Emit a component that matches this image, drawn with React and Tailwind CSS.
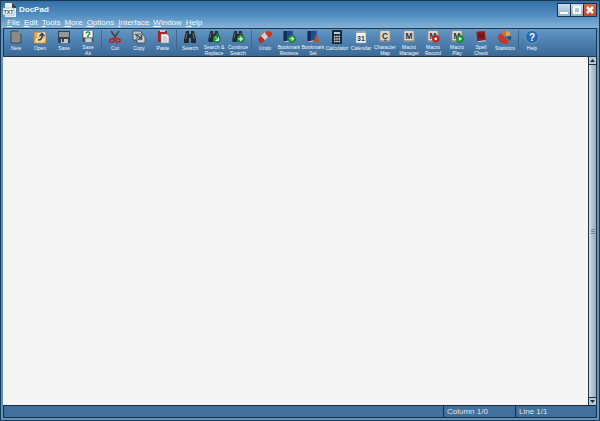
const menus = ["File", "Edit", "Tools", "More", "Options", "Interface", "Window", "Help"];

function NewIcon() {
  return (
    <>
      <path d="M2 1h7l3 3v9H2z" fill="#8c8c84" stroke="#33475a" strokeWidth="1" />
      <path d="M9 1v3h3" fill="#b5b5ae" stroke="#4c5a66" strokeWidth=".6" />
    </>
  );
}

function OpenIcon() {
  return (
    <>
      <path d="M1 2h5l1 2h6v9H1z" fill="#e9a94c" stroke="#b97828" strokeWidth=".7" />
      <path d="M4 3l8-1 1 9-8 1z" fill="#f3dfb2" />
      <path d="M1 13l2-6h10l-1 6z" fill="#f8d68c" stroke="#c08a35" strokeWidth=".6" />
      <path d="M5 10q5 0 4-6M6.500 6L9 3.500 11.500 6" fill="none" stroke="#24407e" strokeWidth="1.500" />
    </>
  );
}

function SaveIcon() {
  return (
    <>
      <path d="M1 1h12v12H2l-1-1z" fill="#36424d" />
      <path d="M2 2h10v5H2z" fill="#92979a" />
      <path d="M4 9h7v4H4z" fill="#c0c5c8" />
      <path d="M5 9h2v3H5z" fill="#38444e" />
    </>
  );
}

function SaveAsIcon() {
  return (
    <>
      <path d="M1 1h12v12H2l-1-1z" fill="#46545f" />
      <path d="M2 1h10v7H2z" fill="#f4f7f5" />
      <path d="M5 3.500q0-1.500 2-1.500t2 1.500q0 1-2 2" fill="none" stroke="#168a36" strokeWidth="1.500" />
      <path d="M6 6h2v1.500H6z" fill="#168a36" />
      <path d="M4 9h7v4H4z" fill="#ccd0d2" />
    </>
  );
}

function CutIcon() {
  return (
    <>
      <path d="M3 1l5 7M11 1L6 8" stroke="#3b4650" strokeWidth="1.500" />
      <ellipse cx="4" cy="10.500" rx="2.200" ry="1.700" fill="none" stroke="#b5261d" strokeWidth="1.600" />
      <ellipse cx="10" cy="10.500" rx="2.200" ry="1.700" fill="none" stroke="#b5261d" strokeWidth="1.600" />
      <path d="M5 9l2-2 2 2" fill="none" stroke="#b5261d" strokeWidth="1.200" />
    </>
  );
}

function CopyIcon() {
  return (
    <>
      <path d="M1 1h7l2 2v7H1z" fill="#c8c6ba" stroke="#39485a" strokeWidth=".8" />
      <path d="M5 4h5l3 3v6H5z" fill="#cfcdc2" stroke="#39485a" strokeWidth=".8" />
      <path d="M3 4l6 4M9.500 5v4H6" fill="none" stroke="#264b78" strokeWidth="1.500" />
    </>
  );
}

function PasteIcon() {
  return (
    <>
      <path d="M2 1h9v11H2z" fill="#a8231e" />
      <path d="M4 0h5v2H4z" fill="#c9ccd0" />
      <path d="M5 4h6l2 2v7H5z" fill="#f1f2f4" stroke="#6d7783" strokeWidth=".6" />
      <path d="M6.500 7h4M6.500 9h5M6.500 11h5" stroke="#8b93a0" strokeWidth=".7" />
    </>
  );
}

function Binoculars() {
  return (
    <>
      <path d="M3 1h3v3h2V1h3l2 8v4H8V8H6v5H1V9z" fill="#202b33" />
      <path d="M4 3L2.500 9M10 3l1 6" stroke="#6d7b82" strokeWidth=".9" />
    </>
  );
}

function GreenBadge({ children }) {
  return (
    <>
      <circle cx="10" cy="9.500" r="4" fill="#1f9a38" stroke="#0f5d22" strokeWidth=".5" />
      {children}
    </>
  );
}

function ReplaceIcon() {
  return (
    <>
      <Binoculars />
      <GreenBadge>
        <path d="M8.500 8l3 3M11.800 8v3.300H8.500" fill="none" stroke="#e5f6e5" strokeWidth="1" />
      </GreenBadge>
    </>
  );
}

function ContinueIcon() {
  return (
    <>
      <Binoculars />
      <GreenBadge>
        <path d="M7.500 9.500h5M10 7v5" stroke="#e5f6e5" strokeWidth="1.200" />
      </GreenBadge>
    </>
  );
}

function UndoIcon() {
  return (
    <>
      <path d="M0 9l3-3 4 4-3 3H2z" fill="#c02c20" />
      <path d="M3 6l4-4 4 4-4 4z" fill="#d9d2cb" />
      <path d="M7 3l2-2h3l2 2v2l-3 3z" fill="#c83a26" />
      <path d="M1 2l4-1-2 3z" fill="#d9752c" />
    </>
  );
}

function Book() {
  return (
    <>
      <path d="M1 1h4v11H2l-1-1z" fill="#142a58" />
      <path d="M5 1h6v10H5z" fill="#1f4a93" />
      <path d="M2 12l9-1v1l-8 1z" fill="#ccd3dc" />
    </>
  );
}

function RetrieveIcon() {
  return (
    <>
      <Book />
      <GreenBadge>
        <path d="M7.500 9.500H12M10 7.500l2 2-2 2" fill="none" stroke="#e5f6e5" strokeWidth="1.100" />
      </GreenBadge>
    </>
  );
}

function BookmarkSetIcon() {
  return (
    <>
      <Book />
      <path d="M9 6h3v4l2 1v2H7v-2l2-1z" fill="#b0592c" />
    </>
  );
}

function CalculatorIcon() {
  return (
    <>
      <rect x="2" y="0" width="10" height="14" rx="1" fill="#1c2935" />
      <path d="M4 2h6v2H4z" fill="#b8cbd9" />
      <path d="M4 6.500h6M4 9h6M4 11.500h6" stroke="#dce7ef" strokeWidth="1.500" strokeDasharray="1.500 .750" />
    </>
  );
}

function CalendarIcon() {
  return (
    <>
      <path d="M2 2h10v11H2z" fill="#f4f5f6" stroke="#8a939b" strokeWidth=".6" />
      <path d="M2 1h10v2H2z" fill="#9fa6ab" />
      <text x="7" y="10.500" textAnchor="middle" fontSize="7" fontWeight="bold" fill="#26323c">31</text>
    </>
  );
}

function KeyCap({ letter }) {
  return (
    <>
      <rect x="1" y="1" width="12" height="12" rx="1" fill="#8f8e87" />
      <rect x="2" y="1" width="10" height="10" rx="1" fill="#d9d6cc" />
      <text x="7" y="9.500" textAnchor="middle" fontSize="9" fontWeight="bold" fill="#2c3033">{letter}</text>
    </>
  );
}

function RecordIcon() {
  return (
    <>
      <KeyCap letter="M" />
      <circle cx="10" cy="9.500" r="4" fill="#bd251b" />
      <circle cx="10" cy="9.500" r="1.500" fill="#fff" />
    </>
  );
}

function PlayIcon() {
  return (
    <>
      <KeyCap letter="M" />
      <GreenBadge>
        <path d="M9 7.500l3.500 2L9 11.500z" fill="#fff" />
      </GreenBadge>
    </>
  );
}

function SpellIcon() {
  return (
    <>
      <path d="M2 2l9-1 1 10-9 1z" fill="#8f1a1c" />
      <path d="M3 12l9-1v1l-8 1z" fill="#ded9d5" />
      <path d="M4 8l1.500-4L7 8M8 5h2.500M8 7h2.500" fill="none" stroke="#4a0c10" strokeWidth=".9" />
    </>
  );
}

function StatisticsIcon() {
  return (
    <>
      <path d="M7 7L2 3a6 6 0 0 0 9 9z" fill="#c93725" />
      <path d="M7 6L3 2a6 6 0 0 1 5-1z" fill="#dc6a32" />
      <path d="M8 6V1a5 5 0 0 1 5 4z" fill="#d7a64b" />
      <path d="M8 7l5-1a6 6 0 0 1-1 5z" fill="#284f83" />
    </>
  );
}

function HelpIcon() {
  return (
    <>
      <circle cx="7" cy="7" r="6.500" fill="#2469b4" stroke="#79aede" strokeWidth=".7" />
      <text x="7" y="10.500" textAnchor="middle" fontSize="10" fontWeight="bold" fill="#fff">?</text>
    </>
  );
}

const groups = [
  [["New", NewIcon], ["Open", OpenIcon], ["Save", SaveIcon], ["Save\nAs", SaveAsIcon]],
  [["Cut", CutIcon], ["Copy", CopyIcon], ["Paste", PasteIcon]],
  [["Search", Binoculars], ["Search &\nReplace", ReplaceIcon], ["Continue\nSearch", ContinueIcon]],
  [
    ["Undo", UndoIcon],
    ["Bookmark\nRetrieve", RetrieveIcon],
    ["Bookmark\nSet", BookmarkSetIcon],
    ["Calculator", CalculatorIcon],
    ["Calendar", CalendarIcon],
    ["Character\nMap", () => <KeyCap letter="Ç" />],
    ["Macro\nManager", () => <KeyCap letter="M" />],
    ["Macro\nRecord", RecordIcon],
    ["Macro\nPlay", PlayIcon],
    ["Spell\nCheck", SpellIcon],
    ["Statistics", StatisticsIcon],
  ],
  [["Help", HelpIcon]],
];

function ToolButton({ label, Icon }) {
  return (
    <button className="flex w-6 flex-col items-center gap-px">
      <svg viewBox="0 0 14 14" className="size-3.5" aria-hidden="true">
        <Icon />
      </svg>
      <span className="whitespace-pre text-center text-[5px] leading-[6px]">{label}</span>
    </button>
  );
}

function TitleBar() {
  return (
    <header className="flex h-4 items-center gap-0.5">
      <svg viewBox="0 0 14 14" className="size-3.5" aria-hidden="true">
        <path d="M2 0h8l3 3v11H2z" fill="#e8edf0" />
        <path d="M9 0h1l3 3v2H9z" fill="#34444f" />
        <path d="M0 5h11v7H0z" fill="#f8fafb" stroke="#7e95a6" strokeWidth=".5" />
        <text x="5.500" y="11" textAnchor="middle" fontSize="5" fontWeight="bold" fill="#2d5579">TXT</text>
      </svg>
      <h1 className="flex-1 text-[8px] font-bold">DocPad</h1>
      <div className="flex gap-px border border-[#1b3349] bg-[#1b3349]">
        <button aria-label="Minimize" className="size-3 bg-linear-to-b from-[#c9deec] to-[#8db0c8]">
          <svg viewBox="0 0 12 12"><path d="M2 9h8" stroke="#fff" strokeWidth="2" /></svg>
        </button>
        <button aria-label="Maximize" className="size-3 bg-linear-to-b from-[#c9deec] to-[#8db0c8]">
          <svg viewBox="0 0 12 12"><path d="M3 3h6v6H3z" fill="none" stroke="#fff" strokeWidth="2" /></svg>
        </button>
        <button aria-label="Close" className="size-3 bg-linear-to-b from-[#d96a4b] to-[#c6482a]">
          <svg viewBox="0 0 12 12"><path d="M3 3l6 6M9 3l-6 6" stroke="#fff" strokeWidth="2.500" /></svg>
        </button>
      </div>
    </header>
  );
}

function ScrollBar() {
  return (
    <div className="flex w-2 flex-col border-l border-[#26333f] bg-linear-to-r from-[#d3dde5] to-[#94a9bc]">
      <button aria-label="Scroll up" className="h-2 border-b border-[#26333f] bg-[#b4cad9]">
        <svg viewBox="0 0 7 7"><path d="M1 5l2.500-3L6 5z" fill="#172b3b" /></svg>
      </button>
      <div className="flex flex-1 flex-col items-center justify-center gap-px">
        <i className="h-px w-1 bg-[#6685a2]" />
        <i className="h-px w-1 bg-[#6685a2]" />
        <i className="h-px w-1 bg-[#6685a2]" />
      </div>
      <button aria-label="Scroll down" className="h-2 border-t border-[#26333f] bg-[#b4cad9]">
        <svg viewBox="0 0 7 7"><path d="M1 2l2.500 3L6 2z" fill="#172b3b" /></svg>
      </button>
    </div>
  );
}

export default function App() {
  return (
    <div className="flex h-screen flex-col border border-[#1c3850] bg-[#5d94c5] px-0.5 pb-0.5 font-['Liberation_Sans',sans-serif] text-[#f2f7fb]">
      <div className="-mx-0.5 bg-linear-to-b from-[#3270aa] via-[#4f8cc0] to-[#84b3d7] px-0.5 pt-px">
        <TitleBar />
        <nav className="flex h-[10px] items-center gap-1 px-1 text-[8px] leading-[10px]">
          {menus.map((name) => (
            <button key={name}>
              <u>{name[0]}</u>
              {name.slice(1)}
            </button>
          ))}
        </nav>
      </div>
      <div className="flex h-[29px] border border-[#1c3850] bg-linear-to-b from-[#6196c5] to-[#3a6997] pt-px font-['Liberation_Sans_Narrow','Liberation_Sans',sans-serif]">
        {groups.map((group, i) => (
          <div key={i} className="flex">
            {i > 0 && <div className="mx-px h-5 w-px bg-[#3a6690]" />}
            {group.map(([label, Icon]) => (
              <ToolButton key={label} label={label} Icon={Icon} />
            ))}
          </div>
        ))}
      </div>
      <main className="flex min-h-0 flex-1 border-r border-[#26333f]">
        <textarea aria-label="Document" className="flex-1 resize-none bg-[#f5f5f6] p-1 text-[8px] text-black outline-none" />
        <ScrollBar />
      </main>
      <footer className="flex h-[13px] border border-[#152c42] bg-[#426f9b] text-[8px] leading-[11px] text-[#dbe6ef]">
        <div className="flex-1" />
        <div className="w-[72px] border-l border-[#152c42] pl-[3px]">Column 1/0</div>
        <div className="w-[81px] border-l border-[#152c42] pl-[3px]">Line 1/1</div>
      </footer>
    </div>
  );
}
